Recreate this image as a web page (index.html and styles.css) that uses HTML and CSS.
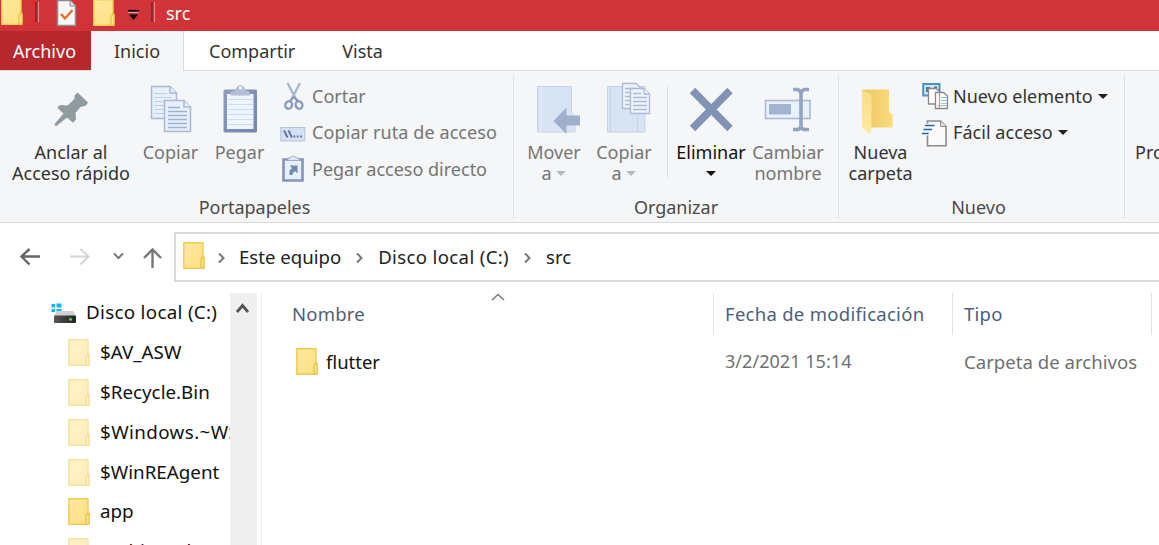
FILE: index.html
```
<!DOCTYPE html>
<html lang="es">
<head>
<meta charset="utf-8">
<title>src</title>
<link rel="stylesheet" href="styles.css">
</head>
<body>
<svg class="defs" width="0" height="0">
  <defs>
    <linearGradient id="yellow" x1="0" y1="0" x2="1" y2="1"><stop offset="0" stop-color="#ffe9a3"/><stop offset="1" stop-color="#ffe07e"/></linearGradient>
    <linearGradient id="gold" x1="0" y1="0" x2="1" y2="0"><stop offset="0" stop-color="#ebc663"/><stop offset="1" stop-color="#fcdc7c"/></linearGradient>
    <linearGradient id="flap" x1="0" y1="0" x2="0" y2="1"><stop offset="0" stop-color="#f8dc85"/><stop offset="1" stop-color="#ffe9a4"/></linearGradient>
    <linearGradient id="board" x1="0" y1="0" x2="1" y2="1"><stop offset="0" stop-color="#8c9dbd"/><stop offset="1" stop-color="#7386aa"/></linearGradient>
    <linearGradient id="drive" x1="0" y1="0" x2="1" y2="0"><stop offset="0" stop-color="#555"/><stop offset="1" stop-color="#222"/></linearGradient>
    <symbol id="folder" viewBox="0 0 22 27">
      <path d="M.8.8H20V26.2H.8Z" fill="url(#yellow)" stroke="#efcb58" stroke-width="1.4"/>
      <path d="M18 26.2V17.5L19.5 15.5H21.2V26.2Z" fill="#ffe48c" stroke="#e9c24c" stroke-width="1.3"/>
    </symbol>
  </defs>
</svg>

<header class="titlebar">
  <svg width="160" height="31" viewBox="0 0 160 31">
    <use href="#folder" x="1" y="-2" width="22" height="27"/>
    <path d="M36 2V22M152 2V22" stroke="#7d262c" stroke-width="1.6"/>
    <path d="M38.500 2V22M154.500 2V22" stroke="#e38287" stroke-width="1.2"/>
    <path d="M57.500 .5H70L75.500 6V25.500H57.500Z" fill="#f8f8f8" stroke="#8c8c8c" stroke-width="1.500"/>
    <path d="M70 .5V6H75.500" fill="#ddd" stroke="#8c8c8c"/>
    <path d="M61 14L65 18.500L72.500 10" fill="none" stroke="#e8702a" stroke-width="2.400"/>
    <use href="#folder" x="93" y="-1" width="22" height="27"/>
    <path d="M128 10.800H139" stroke="#000" stroke-width="1.800"/>
    <path d="M128 12.400H139" stroke="#eda4a7" stroke-width="1"/>
    <path d="M129 14.500H138L133.500 20Z"/>
  </svg>
  <span class="window-name">src</span>
</header>

<nav class="tabs">
  <span class="tab file">Archivo</span>
  <span class="tab active">Inicio</span>
  <span class="tab share">Compartir</span>
  <span class="tab view">Vista</span>
</nav>

<section class="ribbon">
  <div class="group clipboard">
    <div class="tools">
      <div class="big">
        <svg width="60" height="66" viewBox="41 76 60 66"><path d="M77.500 92.500L88 102.500L86 105.500L80.500 107L75.500 113L76 119.500L73 122.800L67 117.500L56.500 126L54.500 125.500L55 123.500L63.500 113.500L58 108.500V106.500L60.500 105L67.500 105.500L74.500 99V95.500Z" fill="#8f9ba0"/></svg>
        <span>Anclar al</span>
        <span>Acceso rápido</span>
      </div>
      <div class="big off">
        <svg width="60" height="66" viewBox="141 76 60 66">
          <g fill="#e6effb" stroke="#a8b8d5" stroke-width="1.500"><path d="M151.500 86.500H170L176.500 93V118.500H151.500Z"/><path d="M170 86.500V93H176.500"/>
          <path d="M154 93.500H167M154 97.500H172M154 101.500H164M154 105.500H164M154 109.500H164M154 113.500H164" stroke="#c3cfe4" stroke-width="1"/>
          <path d="M164.500 100.500H184L190.500 107V131.500H164.500Z"/><path d="M184 100.500V107H190.500"/></g>
          <path d="M168 107.500H180M168 111.500H187M168 115.500H187M168 119.500H187M168 123.500H187M168 127.500H187" stroke="#9fb1d0" stroke-width="1.300"/>
        </svg>
        <span>Copiar</span>
      </div>
      <div class="big off">
        <svg width="60" height="66" viewBox="210 76 60 66">
          <rect x="223.500" y="89.500" width="33.500" height="43" rx="1.500" fill="url(#board)"/>
          <path d="M227 94H253.500V129H227Z" fill="#edf4fe"/>
          <path d="M228 99.500H253M228 104.500H253M228 109.500H253M228 114.500H253M228 119.500H253M228 124.500H253" stroke="#cfdcef"/>
          <path d="M230.500 95.500V92L236 90C236 83.500 245 83.500 245 90L250 92V95.500Z" fill="#afbfda"/><circle cx="240.500" cy="88" r="1.700" fill="#f5f6f7"/>
        </svg>
        <span>Pegar</span>
      </div>
      <div class="list off">
        <div class="row">
          <svg width="30" height="30" viewBox="280 82 30 30"><path d="M287.500 83L297 101M300 83L290.500 101" stroke="#aab9d3" stroke-width="2.400"/><ellipse cx="288.700" cy="105" rx="3.300" ry="3.800" transform="rotate(25 288.700 105)" fill="none" stroke="#8799ba" stroke-width="2.300"/><ellipse cx="299" cy="105" rx="3.300" ry="3.800" transform="rotate(-25 299 105)" fill="none" stroke="#8799ba" stroke-width="2.300"/><path d="M290 101L294 97L298 101" fill="none" stroke="#8799ba" stroke-width="2"/></svg>
          <span>Cortar</span>
        </div>
        <div class="row">
          <svg width="30" height="30" viewBox="280 118 30 30"><rect x="280.800" y="126.500" width="24" height="13.500" fill="#d5e0f2" stroke="#b5c3dc"/><path d="M284 129.500L287.500 136.500M288.500 129.500L292 136.500" stroke="#5f7398" stroke-width="1.800"/><path d="M293.500 135.500H302" stroke="#5f7398" stroke-width="1.800" stroke-dasharray="1.800 1.500"/></svg>
          <span class="route">Copiar ruta de acceso</span>
        </div>
        <div class="row">
          <svg width="30" height="30" viewBox="280 155 30 30"><path d="M283.500 159.500H302.500V180.500H283.500Z" fill="#e6effc" stroke="#8395b7" stroke-width="2.600"/><path d="M288 160.500V158H290C291 155.500 295.500 155.500 296.500 158H299V160.500Z" fill="#dfe8f6" stroke="#a0b0cd"/><path d="M289.500 175V170.500L292 168L289.500 165.500H297.500V173.500L295 171L292.500 173.500V175Z" fill="#7388ae"/></svg>
          <span>Pegar acceso directo</span>
        </div>
      </div>
    </div>
    <div class="caption">Portapapeles</div>
  </div>

  <div class="group organize">
    <div class="tools">
      <div class="big off">
        <svg width="60" height="66" viewBox="524 76 60 66"><path d="M537.500 86.500H571.500V112L575 116V132H537.500Z" fill="#d8e3f4" stroke="#c5d3e9"/><path d="M541 87V132" stroke="#e4ecf8"/><path d="M553.500 121L566.500 107.500V115.500H580V125.500H566.500V134Z" fill="#9fb0cd"/></svg>
        <span>Mover</span>
        <span>a <b class="drop"></b></span>
      </div>
      <div class="big off">
        <svg width="60" height="66" viewBox="594 76 60 66"><path d="M607.500 86.500H645V132H607.500Z" fill="#d8e3f4" stroke="#c5d3e9"/><path d="M610.500 87V132M637.500 132V117L641 112" stroke="#c5d3e9" fill="none"/>
          <g fill="#ecf3fc" stroke="#abbad5" stroke-width="1.300"><path d="M622.500 83.500H636L641 88V108.500H622.500Z"/><path d="M625 88.500H634M625 92.500H634M625 96.500H630M625 100.500H630M625 104.500H630"/><path d="M630.500 88.500H644L649.500 94V113.500H630.500Z"/><path d="M644 88.500V94H649.500"/><path d="M633 93.500H641M633 97.500H647M633 101.500H647M633 105.500H647M633 109.500H647"/></g></svg>
        <span>Copiar</span>
        <span>a <b class="drop"></b></span>
      </div>
      <div class="divider"></div>
      <div class="big strong">
        <svg width="60" height="66" viewBox="681 76 60 66"><path d="M692.500 90.500L730 128.500M730 90.500L692.500 128.500" stroke="#8193b4" stroke-width="7.500"/></svg>
        <span>Eliminar</span>
        <span><b class="drop"></b></span>
      </div>
      <div class="big off">
        <svg width="60" height="66" viewBox="758 76 60 66"><rect x="765.500" y="100.500" width="44.500" height="18" fill="#e9f1fc" stroke="#a9b9d6" stroke-width="1.600"/><path d="M769 104H791V114.500H769Z" fill="#a3b3d0"/><path d="M793 89.500H797Q801 90 801 94V125Q801 129.500 797 129.500H793M809 89.500H805Q801 90 801 94M801 125Q801 129.500 805 129.500H809" fill="none" stroke="#93a4c3" stroke-width="3.600"/></svg>
        <span>Cambiar</span>
        <span>nombre</span>
      </div>
    </div>
    <div class="caption">Organizar</div>
  </div>

  <div class="group new">
    <div class="tools">
      <div class="big">
        <svg width="60" height="66" viewBox="851 76 60 66"><path d="M862.500 89.500H889V111.500L892.500 115V127.500H866Z" fill="url(#gold)"/><path d="M862 89.500L871.500 94.500V128L870.500 134L862 128Z" fill="url(#flap)"/></svg>
        <span>Nueva</span>
        <span>carpeta</span>
      </div>
      <div class="list">
        <div class="row">
          <svg width="30" height="30" viewBox="922 82 30 30"><path d="M923.200 84H939.500V95.500H923.200Z" fill="#cfe8f5" stroke="#4b93bd" stroke-width="2"/><path d="M926 87H930V92H926Z" fill="#3f7f9b"/><path d="M934 86.500H937V90H934Z" fill="#3375a4"/><g fill="#fff" stroke="#888" stroke-width="1.300"><path d="M928.500 88.500H936L940 92V104H928.500Z"/><path d="M935.500 92.500H943.500L947.500 96V108.500H935.500Z"/></g><path d="M939.500 93V108" stroke="#f08278" stroke-width="1.200"/><path d="M941 97.500H947M941 100.500H947M941 103.500H947M937 105.500H947" stroke="#9bbce2"/></svg>
          <span>Nuevo elemento <b class="drop"></b></span>
        </div>
        <div class="row">
          <svg width="30" height="30" viewBox="922 118 30 30"><path d="M927.500 120H940.500L946 125.500V144.800H927.500Z" fill="#fafafa" stroke="#8a8a8a" stroke-width="1.600"/><path d="M940.500 120V125.500H946" fill="#e3e3e3" stroke="#8a8a8a"/><path d="M925 124.500H934.500M923.500 128.500H932M922 132.500H928.500" stroke="#f5f6f7" stroke-width="4"/><path d="M925 124.500H934.500M923.500 128.500H932M922 132.500H928.500" stroke="#1c67ad" stroke-width="1.700"/></svg>
          <span class="ease">Fácil acceso <b class="drop"></b></span>
        </div>
      </div>
    </div>
    <div class="caption">Nuevo</div>
  </div>

  <div class="group open">
    <div class="tools"><div class="big"><span>Pro</span></div></div>
  </div>
</section>

<section class="navbar">
  <svg width="174" height="50" viewBox="0 232 174 50" fill="none">
    <g stroke="#666" stroke-width="2.400"><path d="M40 256.500H21.500M29.500 249L21.500 256.500L29.500 264.500"/><path d="M152.500 268V250M144 258L152.500 249.500L161 258" stroke="#777"/><path d="M114 253.500L118.500 258L123 253.500" stroke="#777" stroke-width="2"/></g>
    <path d="M70 256.500H88.500M80.500 249L88.500 256.500L80.500 264.500" stroke="#d5d5d5" stroke-width="2"/>
  </svg>
  <div class="address">
    <svg class="folder" width="22" height="27"><use href="#folder"/></svg>
    <svg class="chev first" width="9" height="12"><path d="M2 1.500L6.500 6L2 10.500"/></svg><span class="c1">Este equipo</span>
    <svg class="chev" width="9" height="12"><path d="M2 1.500L6.500 6L2 10.500"/></svg><span class="c2">Disco local (C:)</span>
    <svg class="chev" width="9" height="12"><path d="M2 1.500L6.500 6L2 10.500"/></svg><span>src</span>
  </div>
</section>

<main class="content">
  <aside class="tree">
    <div class="node root">
      <svg width="26" height="22" viewBox="51 303 26 22"><path d="M51.500 305H55V308.500H51.500ZM56.500 304.500H61.500V308.500H56.500ZM51.500 310H55V313H51.500ZM56.500 310H61.500V313.500H56.500Z" fill="#14b4f0"/><path d="M57 312H73L76 317H54Z" fill="#cfd2d4"/><rect x="54" y="316.500" width="22" height="7.500" rx="1" fill="url(#drive)"/><circle cx="70.500" cy="320.300" r="1.500" fill="#3fe04c"/></svg>
      <span>Disco local (C:)</span>
    </div>
    <div class="node pale"><svg width="22" height="27"><use href="#folder"/></svg><span>$AV_ASW</span></div>
    <div class="node pale"><svg width="22" height="27"><use href="#folder"/></svg><span>$Recycle.Bin</span></div>
    <div class="node pale"><svg width="22" height="27"><use href="#folder"/></svg><span class="wide">$Windows.~WS</span></div>
    <div class="node pale"><svg width="22" height="27"><use href="#folder"/></svg><span>$WinREAgent</span></div>
    <div class="node"><svg width="22" height="27"><use href="#folder"/></svg><span>app</span></div>
    <div class="node pale"><svg width="22" height="27"><use href="#folder"/></svg><span>Archivos de</span></div>
  </aside>
  <div class="scrollbar"><svg width="26" height="30"><path d="M7 19L12.500 12.500L18 19" fill="none" stroke="#555" stroke-width="2.800"/></svg></div>
  <div class="files">
    <div class="headings">
      <div class="name">Nombre<svg class="sort" width="14" height="8"><path d="M1 7L7 1.500L13 7" fill="none" stroke="#777" stroke-width="1.500"/></svg></div>
      <div class="date">Fecha de modificación</div>
      <div class="type">Tipo</div>
    </div>
    <div class="file-row">
      <div class="name"><svg width="22" height="27"><use href="#folder"/></svg><span>flutter</span></div>
      <div class="date">3/2/2021 15:14</div>
      <div class="type">Carpeta de archivos</div>
    </div>
  </div>
</main>
</body>
</html>
```

FILE: styles.css
```
* { box-sizing: border-box; }
body {
  margin: 0;
  width: 1159px;
  height: 545px;
  overflow: hidden;
  display: flex;
  flex-direction: column;
  background: #fff;
  color: #333;
  font: 18px/21px "Noto Sans", "Open Sans", sans-serif;
  white-space: nowrap;
}
svg { display: block; flex: none; }
.defs { position: absolute; }

.titlebar { display: flex; height: 31px; background: #d13438; color: #fff; }
.window-name { padding: 3px 0 0 6px; }

.tabs { display: flex; height: 40px; border-bottom: 1px solid #d9dbdd; flex: none; }
.tab { padding-top: 10px; height: 39px; }
.tab.file { width: 91px; padding-left: 13px; background: #b7282e; color: #fff; }
.tab.active { width: 93px; height: 40px; padding-left: 23px; background: #f5f6f7; border-right: 1px solid #d9dbdd; }
.tab.share { padding-left: 25px; }
.tab.view { padding-left: 47px; }

.ribbon { display: flex; flex: none; height: 152px; background: #f5f6f7; border-bottom: 1px solid #d5d7d9; }
.group { display: flex; flex: none; flex-direction: column; height: 144px; margin-top: 4px; border-right: 1px solid #dfe1e3; }
.tools { display: grid; height: 122px; padding-top: 1px; }
.clipboard { width: 514px; }
.clipboard .tools { grid-template-columns: 142px 57px 81px 1fr; }
.organize { width: 325px; }
.organize .tools { grid-template-columns: 80px 60px 27px 60px 94px; }
.new { width: 286px; }
.new .tools { grid-template-columns: 83px 1fr; }
.open { border: 0; }
.open .big { padding: 66px 0 0 10px; }
.caption { text-align: center; color: #4a4a4a; }
.clipboard .caption { padding-right: 4px; }
.new .caption { padding-right: 6px; }
.big { display: flex; flex-direction: column; align-items: center; text-align: center; }
.big span { height: 21px; }
.off { color: #757575; }
.strong { color: #111; }
.divider { width: 1px; height: 92px; margin: 10px auto 0 13px; background: #dcdee0; }
.drop { display: inline-block; vertical-align: 4px; margin-left: 1px; border: 5px solid transparent; border-top-color: #222; border-bottom: 0; }
.off .drop { border-top-color: #b5b7b9; margin-left: 0; }
.strong .drop { margin: 0; border-top-color: #111; }
.list { display: flex; flex-direction: column; padding-top: 3px; }
.row { display: flex; align-items: center; height: 36.500px; }
.row span { padding: 0 0 2px 1px; }
.clipboard .row span { padding-left: 2px; }
.route { letter-spacing: .1px; }
.ease { letter-spacing: .05px; }

.navbar { display: flex; flex: none; height: 58px; padding-top: 9px; }
.address { display: flex; flex: 1; align-items: center; height: 50px; padding-left: 7px; border: solid #dadada; border-width: 2px 0 2px 2px; color: #222; font-size: 18.600px; }
.address span { padding-bottom: 1px; }
.address .chev { margin: 1px 14px 0 14px; fill: none; stroke: #777; stroke-width: 2; }
.address .chev.first { margin: 1px 13px 0 12px; }
.address .folder { margin: 0 0 3px; }
.c2 { letter-spacing: .35px; }

.content { display: flex; flex: 1; padding-top: 12px; min-height: 0; font-size: 18.500px; color: #111; }
.tree { width: 230px; overflow: hidden; }
.node { display: flex; align-items: center; height: 39.800px; padding-left: 68px; }
.node span { padding-left: 10px; font-size: 18.800px; }
.node .wide { letter-spacing: .4px; }
.node.pale svg { opacity: .55; }
.node.root { padding-left: 51px; }
.node.root span { padding-left: 9px; letter-spacing: .3px; }
.scrollbar { width: 27px; background: #efefef; }
.files { flex: 1; margin-left: 4px; border-left: 1px solid #f0f0f0; }
.headings, .file-row { display: grid; grid-template-columns: 452px 239px 199px; }
.headings { height: 42px; color: #4c607a; line-height: 41px; }
.headings > div { position: relative; border-right: 1px solid #e2e2e2; }
.headings .name { padding-left: 30px; letter-spacing: .2px; }
.headings .date, .headings .type { letter-spacing: .28px; }
.sort { position: absolute; left: 229px; top: 0; }
.date, .type { padding-left: 11px; }
.file-row { height: 52px; align-items: center; color: #707070; font-size: 18.100px; }
.file-row .name { display: flex; align-items: center; padding-left: 34px; color: #111; font-size: 18.500px; }
.file-row .name span { padding-left: 8px; }
.file-row .type { font-size: 18.600px; }
```
